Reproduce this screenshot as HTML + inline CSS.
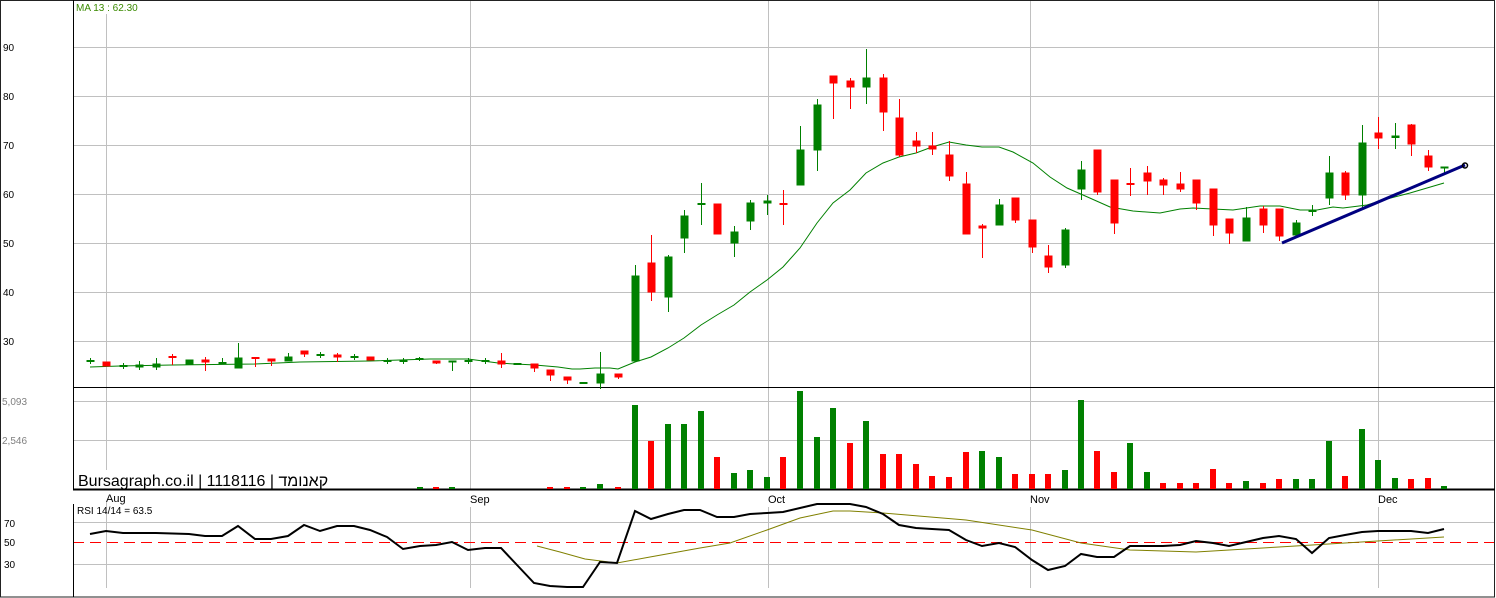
<!DOCTYPE html>
<html><head><meta charset="utf-8"><style>
html,body{margin:0;padding:0;background:#fff;width:1496px;height:598px;overflow:hidden}
svg{display:block}
text{font-family:"Liberation Sans",Arial,sans-serif}
</style></head><body>
<svg width="1496" height="598" viewBox="0 0 1496 598" xmlns="http://www.w3.org/2000/svg">
<rect x="0" y="0" width="1496" height="598" fill="#fff"/>
<!-- grid -->
<g stroke="#c0c0c0" stroke-width="1" shape-rendering="crispEdges">
<line x1="73" y1="47.5" x2="1494" y2="47.5"/>
<line x1="73" y1="96.5" x2="1494" y2="96.5"/>
<line x1="73" y1="145.5" x2="1494" y2="145.5"/>
<line x1="73" y1="194.5" x2="1494" y2="194.5"/>
<line x1="73" y1="243.5" x2="1494" y2="243.5"/>
<line x1="73" y1="292.5" x2="1494" y2="292.5"/>
<line x1="73" y1="341.5" x2="1494" y2="341.5"/>
<line x1="73" y1="401.5" x2="1494" y2="401.5"/>
<line x1="73" y1="440.5" x2="1494" y2="440.5"/>
<line x1="73" y1="522.5" x2="1494" y2="522.5"/>
<line x1="73" y1="564.5" x2="1494" y2="564.5"/>
<line x1="106.5" y1="14" x2="106.5" y2="470"/>
<line x1="470.5" y1="0" x2="470.5" y2="489"/>
<line x1="768.5" y1="0" x2="768.5" y2="489"/>
<line x1="1030.5" y1="0" x2="1030.5" y2="489"/>
<line x1="1378.5" y1="0" x2="1378.5" y2="489"/>
<line x1="106.5" y1="502" x2="106.5" y2="588"/>
<line x1="470.5" y1="507" x2="470.5" y2="588"/>
<line x1="768.5" y1="507" x2="768.5" y2="588"/>
<line x1="1030.5" y1="507" x2="1030.5" y2="588"/>
<line x1="1378.5" y1="507" x2="1378.5" y2="588"/>
</g>
<line x1="73" y1="542.5" x2="1494" y2="542.5" stroke="#ff0000" stroke-width="1" stroke-dasharray="11,6"/>
<!-- frames -->
<g stroke="#000" shape-rendering="crispEdges" fill="none">
<rect x="0.5" y="0.5" width="1494" height="596.5" stroke="#222"/>
<line x1="73.5" y1="0" x2="73.5" y2="490"/>
<line x1="73" y1="387.5" x2="1495" y2="387.5"/>
<line x1="73" y1="489.5" x2="1495" y2="489.5" stroke-width="2"/>
<line x1="73.5" y1="504" x2="73.5" y2="597"/>
</g>
<!-- labels -->
<g font-size="10" fill="#000">
<text x="3" y="51">90</text><text x="3" y="100">80</text><text x="3" y="149">70</text>
<text x="3" y="198">60</text><text x="3" y="247">50</text><text x="3" y="296">40</text><text x="3" y="345">30</text>
<text x="2" y="405" fill="#808080">5,093</text><text x="2" y="444" fill="#808080">2,546</text>
<text x="4" y="527">70</text><text x="4" y="546">50</text><text x="4" y="568">30</text>
<text x="106" y="502" font-size="11">Aug</text><text x="470" y="503" font-size="11">Sep</text>
<text x="768" y="503" font-size="11">Oct</text><text x="1030" y="503" font-size="11">Nov</text><text x="1378" y="503" font-size="11">Dec</text>
<text x="77" y="514" font-size="10">RSI 14/14 = 63.5</text>
<text x="76" y="11" font-size="10" fill="#3a8a00">MA 13 : 62.30</text>
</g>
<text x="78" y="486" font-size="16" fill="#000" style="font-family:'Liberation Sans','Noto Sans CJK JP',sans-serif">Bursagraph.co.il | 1118116 | קאנומד</text>
<!-- MA -->
<polyline fill="none" stroke="#008000" stroke-width="1" points="90,367 120,366 172,365 255,364 300,362 370,361 430,359 468,359 498,363 515,364 535,365 558,367 572,369 580,369 595,368 610,368 618,369 635,362 651,357 668,348 684,338 701,325 717,315 734,305 750,292 767,280 783,267 800,248 817,223 833,203 850,190 866,173 883,163 899,157 916,153 932,147 949,142 966,145 982,147 999,147 1013,152 1033,163 1050,177 1067,188 1083,195 1110,207 1133,211 1160,213 1180,209 1193,208 1233,210 1260,206 1280,206 1300,210 1317,210 1333,207 1343,208 1367,205 1383,200 1410,193 1444,183"/>
<!-- candles -->
<g shape-rendering="crispEdges">
<g fill="#008000" stroke="#008000">
<line x1="90.5" y1="358" x2="90.5" y2="364"/><rect x="87" y="360.5" width="7" height="1" />
<line x1="123.5" y1="363" x2="123.5" y2="369"/><rect x="120" y="365.5" width="7" height="1"/>
<line x1="139.5" y1="361" x2="139.5" y2="370"/><rect x="136" y="365" width="7" height="2"/>
<line x1="156.5" y1="358" x2="156.5" y2="370"/><rect x="153" y="364" width="7" height="3"/>
<rect x="186" y="360" width="7" height="4"/>
<line x1="222.5" y1="358" x2="222.5" y2="364"/><rect x="219" y="362.5" width="7" height="1"/>
<line x1="238.5" y1="343" x2="238.5" y2="368"/><rect x="235" y="358" width="7" height="10"/>
<line x1="288.5" y1="353" x2="288.5" y2="361"/><rect x="285" y="357" width="7" height="4"/>
<line x1="320.5" y1="352" x2="320.5" y2="358"/><rect x="317" y="354.5" width="7" height="1"/>
<line x1="354.5" y1="354" x2="354.5" y2="360"/><rect x="351" y="356.5" width="7" height="1"/>
<line x1="387.5" y1="358" x2="387.5" y2="364"/><rect x="384" y="360.5" width="7" height="1"/>
<line x1="403.5" y1="358" x2="403.5" y2="364"/><rect x="400" y="360.5" width="7" height="1"/>
<line x1="419.5" y1="357" x2="419.5" y2="361"/><rect x="416" y="358.5" width="7" height="1"/>
<line x1="452.5" y1="361" x2="452.5" y2="371"/><rect x="449" y="361" width="7" height="1"/>
<line x1="468.5" y1="358" x2="468.5" y2="364"/><rect x="465" y="360.5" width="7" height="1"/>
<line x1="485.5" y1="358" x2="485.5" y2="364"/><rect x="482" y="360.5" width="7" height="1"/>
<line x1="517.5" y1="363" x2="517.5" y2="364"/><rect x="514" y="363.5" width="7" height="1"/>
<rect x="580" y="382.5" width="7" height="1"/>
<line x1="600.5" y1="352" x2="600.5" y2="389"/><rect x="597" y="374" width="7" height="9"/>
<line x1="635.5" y1="265" x2="635.5" y2="361"/><rect x="632" y="276" width="7" height="85"/>
<line x1="668.5" y1="255" x2="668.5" y2="312"/><rect x="665" y="257" width="7" height="40"/>
<line x1="684.5" y1="210" x2="684.5" y2="253"/><rect x="681" y="216" width="7" height="22"/>
<line x1="701.5" y1="183" x2="701.5" y2="225"/><rect x="698" y="203.5" width="7" height="1"/>
<line x1="734.5" y1="226" x2="734.5" y2="257"/><rect x="731" y="232" width="7" height="11"/>
<line x1="750.5" y1="200" x2="750.5" y2="230"/><rect x="747" y="203" width="7" height="18"/>
<line x1="767.5" y1="195" x2="767.5" y2="215"/><rect x="764" y="201" width="7" height="2"/>
<line x1="800.5" y1="126" x2="800.5" y2="185"/><rect x="797" y="150" width="7" height="35"/>
<line x1="817.5" y1="99" x2="817.5" y2="171"/><rect x="814" y="105" width="7" height="45"/>
<line x1="866.5" y1="49" x2="866.5" y2="104"/><rect x="863" y="78" width="7" height="9"/>
<line x1="999.5" y1="199" x2="999.5" y2="225"/><rect x="996" y="205" width="7" height="20"/>
<line x1="1065.5" y1="228" x2="1065.5" y2="268"/><rect x="1062" y="230" width="7" height="35"/>
<line x1="1081.5" y1="161" x2="1081.5" y2="200"/><rect x="1078" y="170" width="7" height="19"/>
<line x1="1246.5" y1="207" x2="1246.5" y2="241"/><rect x="1243" y="218" width="7" height="23"/>
<line x1="1296.5" y1="220" x2="1296.5" y2="235"/><rect x="1293" y="223" width="7" height="12"/>
<line x1="1312.5" y1="205" x2="1312.5" y2="216"/><rect x="1309" y="210.5" width="7" height="1"/>
<line x1="1329.5" y1="156" x2="1329.5" y2="205"/><rect x="1326" y="173" width="7" height="25"/>
<line x1="1362.5" y1="125" x2="1362.5" y2="210"/><rect x="1359" y="143" width="7" height="52"/>
<line x1="1395.5" y1="123" x2="1395.5" y2="149"/><rect x="1392" y="136" width="7" height="1.5"/>
<line x1="1444.5" y1="167" x2="1444.5" y2="175"/><rect x="1441" y="167" width="7" height="1"/>
</g>
<g fill="#ff0000" stroke="#ff0000">
<rect x="103" y="362" width="7" height="4"/>
<line x1="172.5" y1="354" x2="172.5" y2="365"/><rect x="169" y="356.5" width="7" height="1"/>
<line x1="205.5" y1="357" x2="205.5" y2="371"/><rect x="202" y="360" width="7" height="2"/>
<line x1="255.5" y1="358" x2="255.5" y2="367"/><rect x="252" y="357.5" width="7" height="1"/>
<line x1="271.5" y1="359" x2="271.5" y2="366"/><rect x="268" y="359" width="7" height="2"/>
<line x1="304.5" y1="351" x2="304.5" y2="357"/><rect x="301" y="351" width="7" height="3"/>
<line x1="337.5" y1="353" x2="337.5" y2="362"/><rect x="334" y="355" width="7" height="2"/>
<rect x="367" y="357" width="7" height="3"/>
<line x1="436.5" y1="361" x2="436.5" y2="364"/><rect x="433" y="361" width="7" height="2"/>
<line x1="501.5" y1="353" x2="501.5" y2="368"/><rect x="498" y="361" width="7" height="3"/>
<line x1="534.5" y1="364" x2="534.5" y2="372"/><rect x="531" y="364" width="7" height="4"/>
<line x1="550.5" y1="370" x2="550.5" y2="381"/><rect x="547" y="370" width="7" height="5"/>
<line x1="567.5" y1="377" x2="567.5" y2="384"/><rect x="564" y="377" width="7" height="3"/>
<line x1="618.5" y1="374" x2="618.5" y2="379"/><rect x="615" y="374" width="7" height="3"/>
<line x1="651.5" y1="235" x2="651.5" y2="301"/><rect x="648" y="263" width="7" height="29"/>
<rect x="714" y="204" width="7" height="30"/>
<line x1="783.5" y1="190" x2="783.5" y2="225"/><rect x="780" y="203.5" width="7" height="1"/>
<line x1="833.5" y1="76" x2="833.5" y2="119"/><rect x="830" y="76" width="7" height="7"/>
<line x1="850.5" y1="78" x2="850.5" y2="109"/><rect x="847" y="81" width="7" height="6"/>
<line x1="883.5" y1="74" x2="883.5" y2="131"/><rect x="880" y="78" width="7" height="34"/>
<line x1="899.5" y1="99" x2="899.5" y2="157"/><rect x="896" y="118" width="7" height="37"/>
<line x1="916.5" y1="132" x2="916.5" y2="153"/><rect x="913" y="141" width="7" height="5"/>
<line x1="932.5" y1="132" x2="932.5" y2="155"/><rect x="929" y="146" width="7" height="3"/>
<line x1="949.5" y1="141" x2="949.5" y2="181"/><rect x="946" y="155" width="7" height="21"/>
<line x1="966.5" y1="172" x2="966.5" y2="234"/><rect x="963" y="184" width="7" height="50"/>
<line x1="982.5" y1="224" x2="982.5" y2="258"/><rect x="979" y="226" width="7" height="2"/>
<line x1="1015.5" y1="198" x2="1015.5" y2="223"/><rect x="1012" y="198" width="7" height="22"/>
<line x1="1032.5" y1="220" x2="1032.5" y2="253"/><rect x="1029" y="220" width="7" height="27"/>
<line x1="1048.5" y1="245" x2="1048.5" y2="273"/><rect x="1045" y="256" width="7" height="11"/>
<line x1="1097.5" y1="150" x2="1097.5" y2="195"/><rect x="1094" y="150" width="7" height="42"/>
<line x1="1114.5" y1="180" x2="1114.5" y2="234"/><rect x="1111" y="180" width="7" height="43"/>
<line x1="1130.5" y1="168" x2="1130.5" y2="196"/><rect x="1127" y="183.5" width="7" height="1"/>
<line x1="1147.5" y1="166" x2="1147.5" y2="195"/><rect x="1144" y="173" width="7" height="8"/>
<line x1="1163.5" y1="178" x2="1163.5" y2="195"/><rect x="1160" y="180" width="7" height="5"/>
<line x1="1180.5" y1="172" x2="1180.5" y2="192"/><rect x="1177" y="184" width="7" height="5"/>
<line x1="1196.5" y1="180" x2="1196.5" y2="210"/><rect x="1193" y="180" width="7" height="23"/>
<line x1="1213.5" y1="189" x2="1213.5" y2="236"/><rect x="1210" y="189" width="7" height="36"/>
<line x1="1229.5" y1="219" x2="1229.5" y2="244"/><rect x="1226" y="219" width="7" height="14"/>
<line x1="1263.5" y1="206" x2="1263.5" y2="233"/><rect x="1260" y="209" width="7" height="16"/>
<line x1="1279.5" y1="209" x2="1279.5" y2="241"/><rect x="1276" y="209" width="7" height="27"/>
<line x1="1345.5" y1="171" x2="1345.5" y2="200"/><rect x="1342" y="173" width="7" height="22"/>
<line x1="1378.5" y1="117" x2="1378.5" y2="149"/><rect x="1375" y="133" width="7" height="5"/>
<line x1="1411.5" y1="124" x2="1411.5" y2="156"/><rect x="1408" y="125" width="7" height="19"/>
<line x1="1428.5" y1="150" x2="1428.5" y2="171"/><rect x="1425" y="156" width="7" height="11"/>
</g>
</g>
<!-- trendline -->
<line x1="1282" y1="243" x2="1465" y2="165" stroke="#000080" stroke-width="3"/>
<circle cx="1465" cy="165.5" r="2.5" fill="none" stroke="#000" stroke-width="1.5"/>
<!-- volume -->
<g shape-rendering="crispEdges">
<g fill="#008000">
<rect x="417" y="487" width="6" height="2"/><rect x="449" y="487" width="6" height="2"/><rect x="580" y="487" width="6" height="2"/>
<rect x="597" y="484" width="6" height="5"/>
<rect x="632" y="405" width="6" height="84"/><rect x="665" y="424" width="6" height="65"/><rect x="681" y="424" width="6" height="65"/>
<rect x="698" y="411" width="6" height="78"/><rect x="731" y="473" width="6" height="16"/><rect x="747" y="470" width="6" height="19"/>
<rect x="764" y="477" width="6" height="12"/><rect x="797" y="391" width="6" height="98"/><rect x="814" y="437" width="6" height="52"/>
<rect x="830" y="408" width="6" height="81"/><rect x="863" y="421" width="6" height="68"/>
<rect x="979" y="451" width="6" height="38"/><rect x="996" y="457" width="6" height="32"/>
<rect x="1062" y="470" width="6" height="19"/><rect x="1078" y="400" width="6" height="89"/>
<rect x="1127" y="443" width="6" height="46"/><rect x="1144" y="472" width="6" height="17"/>
<rect x="1243" y="481" width="6" height="8"/><rect x="1293" y="479" width="6" height="10"/><rect x="1309" y="479" width="6" height="10"/>
<rect x="1326" y="441" width="6" height="48"/><rect x="1359" y="429" width="6" height="60"/><rect x="1375" y="460" width="6" height="29"/>
<rect x="1392" y="478" width="6" height="11"/><rect x="1441" y="486" width="6" height="3"/>
</g>
<g fill="#ff0000">
<rect x="433" y="487" width="6" height="2"/><rect x="547" y="487" width="6" height="2"/><rect x="564" y="487" width="6" height="2"/>
<rect x="615" y="487" width="6" height="2"/>
<rect x="648" y="441" width="6" height="48"/><rect x="714" y="457" width="6" height="32"/>
<rect x="780" y="457" width="6" height="32"/><rect x="847" y="443" width="6" height="46"/>
<rect x="880" y="454" width="6" height="35"/><rect x="896" y="454" width="6" height="35"/><rect x="913" y="464" width="6" height="25"/>
<rect x="929" y="476" width="6" height="13"/><rect x="946" y="477" width="6" height="12"/><rect x="963" y="452" width="6" height="37"/>
<rect x="1012" y="474" width="6" height="15"/><rect x="1029" y="474" width="6" height="15"/><rect x="1045" y="474" width="6" height="15"/>
<rect x="1094" y="451" width="6" height="38"/><rect x="1111" y="472" width="6" height="17"/>
<rect x="1160" y="483" width="6" height="6"/><rect x="1177" y="483" width="6" height="6"/><rect x="1193" y="483" width="6" height="6"/>
<rect x="1210" y="469" width="6" height="20"/><rect x="1226" y="483" width="6" height="6"/><rect x="1260" y="483" width="6" height="6"/>
<rect x="1276" y="479" width="6" height="10"/><rect x="1342" y="476" width="6" height="13"/>
<rect x="1408" y="479" width="6" height="10"/><rect x="1425" y="478" width="6" height="11"/>
</g>
</g>
<!-- RSI -->
<polyline fill="none" stroke="#808000" stroke-width="1" points="537,546 560,552 585,559 617,563 650,557 700,548 730,543 767,530 800,518 833,511 850,511 883,513 966,520 1032,530 1081,543 1130,550 1196,552 1279,547 1345,543 1444,537"/>
<polyline fill="none" stroke="#000" stroke-width="2" points="90,534 106,531 123,533 156,533 189,534 205,536 222,536 238,526 255,539 271,539 288,536 304,525 320,531 337,526 354,526 370,530 387,537 403,549 420,546 436,545 452,542 468,550 485,548 501,548 517,565 534,583 550,586 567,587 583,587 600,562 617,563 635,511 651,519 668,514 684,510 700,510 717,517 734,517 750,514 767,513 783,512 800,508 817,504 833,504 850,504 866,507 883,514 899,525 916,528 932,529 949,530 966,540 982,546 999,543 1015,547 1032,560 1048,570 1065,566 1081,554 1097,557 1114,557 1130,546 1147,546 1163,546 1180,545 1196,541 1213,543 1229,546 1246,542 1263,538 1279,536 1296,539 1312,553 1329,538 1345,535 1362,532 1378,531 1395,531 1411,531 1428,533 1444,529"/>
</svg>
</body></html>
